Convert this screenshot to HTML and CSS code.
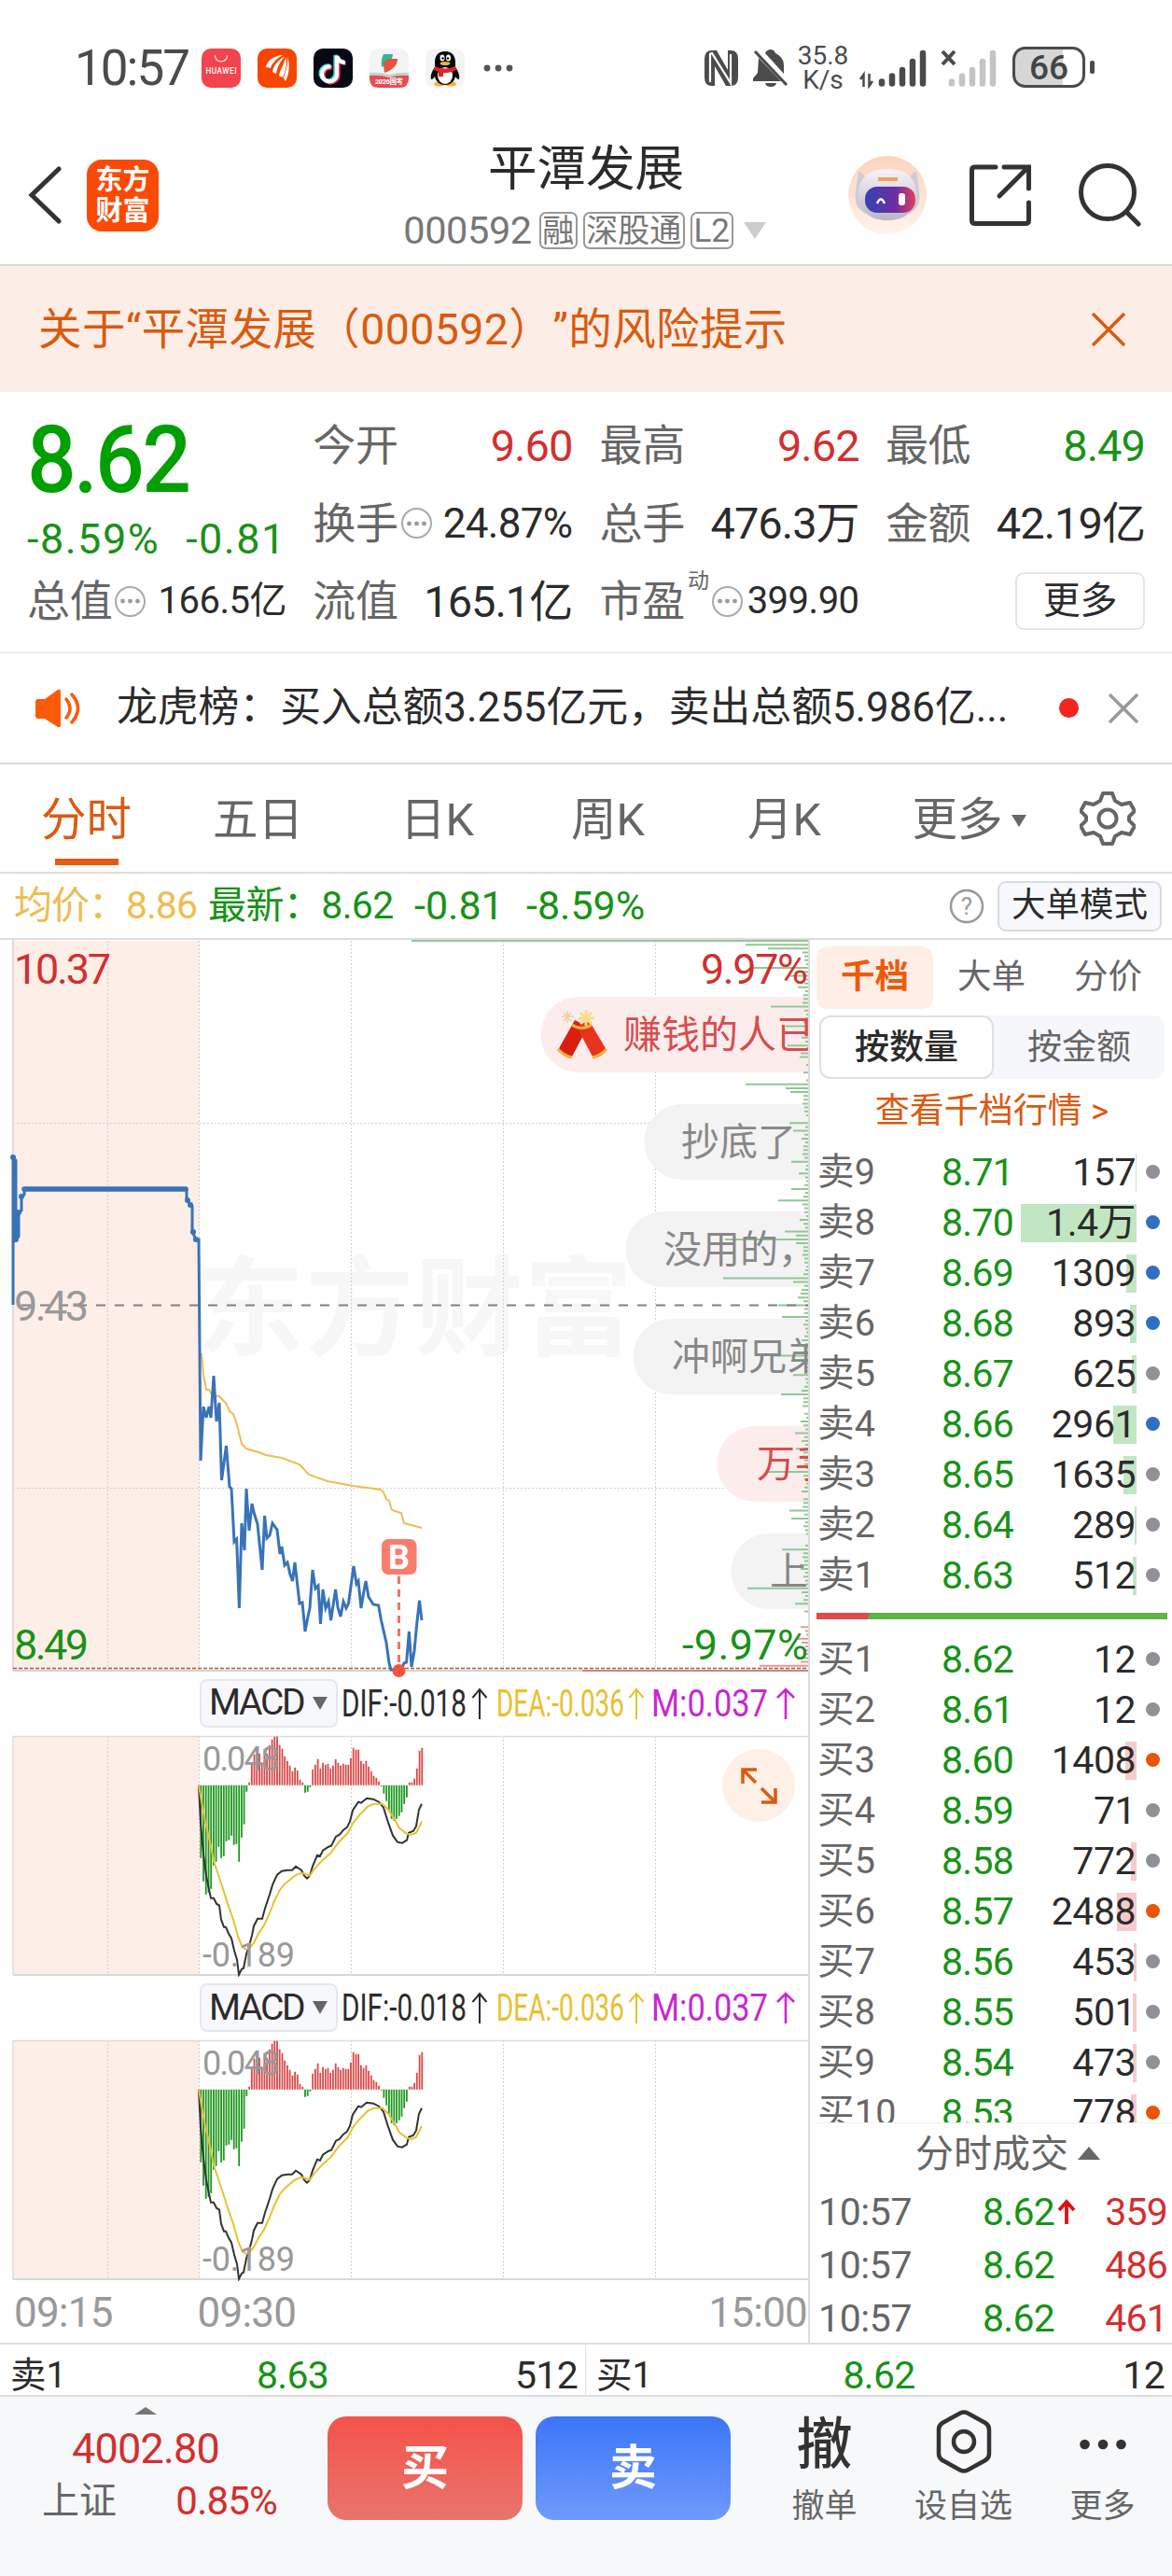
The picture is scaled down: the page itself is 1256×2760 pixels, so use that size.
FILE: index.html
```html
<!DOCTYPE html>
<html lang="zh-CN">
<head>
<meta charset="utf-8">
<title>平潭发展 000592</title>
<link rel="stylesheet" href="styles.css">
</head>
<body>
<div class="phone">
  <div class="status">
    <span class="clock">10:57</span>
    <div class="apps">
      <svg viewBox="0 0 42 42"><rect width="42" height="42" rx="10" fill="#f2444f"/><path d="M14.500 7.500a6.500 6.500 0 0 0 13 0" fill="none" stroke="#fff" stroke-width="1.200"/><text x="21" y="27" font-size="8.200" font-weight="500" fill="#fff" text-anchor="middle" textLength="33">HUAWEI</text></svg>
      <svg viewBox="0 0 42 42"><rect width="42" height="42" rx="10" fill="#f84600"/><path d="M27 7C17 8 10 13 9 20l5 1C15 16 20 11 27 7zM29 8c-7 5-12 10-13 17l4 2c1-8 5-13 9-19zM30 9c-1 8-6 13-7 20l4 2c3-7 5-14 3-22zM32 9c1 9-2 15-4 23l2 3c4-8 5-18 2-26z" fill="#fff"/></svg>
      <svg viewBox="0 0 42 42"><rect width="42" height="42" rx="10" fill="#070a16"/><g fill="none" stroke-width="4.200"><path d="M17 18.500a8 8 0 1 0 6.500 8.500V7c1 4 4 7 9 7" stroke="#3fe0dc"/><path d="M20 20.500a8 8 0 1 0 6.500 8V9c1 4 4 7 8 7" stroke="#f0325a"/><path d="M18.500 19.500a8 8 0 1 0 6.500 8V8c1 4 4 7 9 7" stroke="#fff"/></g></svg>
      <svg viewBox="0 0 42 42"><rect width="42" height="42" rx="10" fill="#f3f4f3"/><path d="M0 28q10-2 21 1 11-3 21-1v4q0 10-10 10H10Q0 42 0 32z" fill="#e94a52"/><path d="M0 26q11-1 21 2 10-3 21-2v3q-11-1-21 2Q11 28 0 29z" fill="#b9d8cf"/><path d="M15 6h10q0 9-12 14-1-9 2-14z" fill="#2fb79b"/><path d="M15 15l5-4h10q0 10-14 15-1-6-1-11z" fill="#ea5140"/><text x="21" y="38" font-size="7.500" font-weight="700" fill="#fff" text-anchor="middle" textLength="30">2026国考</text></svg>
      <svg viewBox="0 0 42 42"><rect width="42" height="42" rx="10" fill="#f4f4f4"/><ellipse cx="15" cy="38" rx="6" ry="2.500" fill="#f5b22c"/><ellipse cx="27" cy="38" rx="6" ry="2.500" fill="#f5b22c"/><path d="M21 3c-8 0-11 5-11 12v5c-3 4-5 9-4 13 2 0 3-2 4-3 1 6 6 9 11 9s10-3 11-9c1 1 2 3 4 3 1-4-1-9-4-13v-5c0-7-3-12-11-12z" fill="#050505"/><ellipse cx="21" cy="29" rx="8" ry="9" fill="#fff"/><path d="M10 19q11 5 22 0l1 4q-7 4-14 3v4h-5v-5l-5-2z" fill="#e02229"/><ellipse cx="18" cy="10" rx="2.500" ry="3.600" fill="#fff"/><ellipse cx="24.500" cy="10" rx="2.500" ry="3.600" fill="#fff"/><circle cx="18.500" cy="10.500" r="1.200"/><circle cx="24" cy="10.500" r="1.200"/><ellipse cx="21" cy="16" rx="5.500" ry="2" fill="#f5b22c"/></svg>
    </div>
    <svg class="more-dots" viewBox="0 0 32 10"><circle cx="4" cy="5" r="3.400"/><circle cx="16" cy="5" r="3.400"/><circle cx="28" cy="5" r="3.400"/></svg>
    <svg class="nfc" viewBox="0 0 36 38"><path d="M8 0h5l12 21V0h3q8 0 8 9v20q0 9-8 9h-5L11 17v21H8q-8 0-8-9V9q0-9 8-9z" fill="#4b4b4b"/><path d="M6 34V4l2-1 20 32V4" fill="none" stroke="#fff" stroke-width="2.200"/></svg>
    <svg class="bell" viewBox="0 0 38 40"><path d="M2 2l34 36" stroke="#4b4b4b" stroke-width="3"/><path d="M13 4q1-3 5-4 5 0 6 4 9 4 9 13v9zM6 9l24 25H0v-3l5-6zM13 36h12q-1 4-6 4t-6-4z" fill="#4b4b4b"/></svg>
    <div class="speed"><span>35.8</span><span>K/s</span></div>
    <svg class="signals" viewBox="0 0 150 44"><g stroke="#4b4b4b" stroke-width="2.500" fill="none"><path d="M2 34l3.500-5v13M15 36l-3.500 5V28"/></g><g stroke="#4b4b4b" stroke-width="6.500" stroke-linecap="round"><path d="M25 38.500v-2M36 38.500v-8M47 38.500V24M58 38.500V15M69 38.500V6"/></g><g stroke="#c4c4c4" stroke-width="6.500" stroke-linecap="round"><path d="M100 38.500v-2M111 38.500v-8M122 38.500V24M133 38.500V15M144 38.500V6"/></g><path d="M90 4l13 14M103 4L90 18" stroke="#4b4b4b" stroke-width="4"/></svg>
    <svg class="battery" viewBox="0 0 90 46"><rect x="1.500" y="1.500" width="75" height="41" rx="12" fill="#fff"/><path d="M13.500 1.500H54v41H13.500a12 12 0 0 1-12-12v-17a12 12 0 0 1 12-12z" fill="#d6d6d6"/><rect x="1.500" y="1.500" width="75" height="41" rx="12" fill="none" stroke="#4b4b4b" stroke-width="3"/><rect x="83" y="15" width="5" height="14" rx="2" fill="#4b4b4b"/><text x="39" y="35" font-size="37" font-weight="500" fill="#444" text-anchor="middle" textLength="42">66</text></svg>
  </div>

  <header class="nav">
    <svg class="back" viewBox="0 0 36 62"><path d="M33 3L4 31l29 28" fill="none" stroke="#333" stroke-width="5" stroke-linecap="round"/></svg>
    <div class="logo"><span>东方</span><span>财富</span></div>
    <div class="title">
      <h1>平潭发展</h1>
      <div class="code"><span class="num">000592</span><span class="badge b1">融</span><span class="badge b2">深股通</span><span class="badge b3">L2</span><svg viewBox="0 0 24 18"><path d="M0 0h24L12 18z" fill="#ccc"/></svg></div>
    </div>
    <svg class="robot" viewBox="0 0 84 84">
      <defs><linearGradient id="halo" x2="0" y2="1"><stop stop-color="#fcd3bd"/><stop offset="1" stop-color="#fff3ec"/></linearGradient><linearGradient id="visor" x2="1"><stop stop-color="#3542b8"/><stop offset=".6" stop-color="#6d2d9f"/><stop offset="1" stop-color="#e0405c"/></linearGradient><linearGradient id="shell" x2="0" y2="1"><stop stop-color="#f6f4f7"/><stop offset="1" stop-color="#b9b6c6"/></linearGradient></defs>
      <circle cx="42" cy="42" r="42" fill="url(#halo)"/><path d="M11 17q4 0 8 7h46q4-7 8-7l3 20q2 12-3 19l-7 6H18l-7-6Q6 49 8 37z" fill="#cfccd9"/><path d="M42 14c20 0 31 10 31 27 0 18-12 28-31 28S11 59 11 41c0-17 11-27 31-27z" fill="url(#shell)"/><path d="M32 25h21" stroke="#f2a25b" stroke-width="4"/><rect x="18" y="33" width="54" height="28" rx="13" fill="url(#visor)"/><path d="M31 51q4-9 8 0" fill="none" stroke="#fff" stroke-width="2.500"/><rect x="54" y="40" width="7" height="13" rx="3" fill="#fff"/></svg>
    <svg class="share" viewBox="0 0 66 66"><path d="M28 3H6Q2.500 3 2.500 6v54q0 3.500 3.500 3.500h54q3.500 0 3.500-3.500V41M37 3h26.500v23M62 4L32 34" fill="none" stroke="#333" stroke-width="5" stroke-linecap="round"/></svg>
    <svg class="search" viewBox="0 0 68 68"><circle cx="32" cy="31" r="28.500" fill="none" stroke="#333" stroke-width="5"/><path d="M52 52l13 13" stroke="#333" stroke-width="5" stroke-linecap="round"/></svg>
  </header>

  <div class="banner"><span>关于“平潭发展（000592）”的风险提示</span><svg viewBox="0 0 38 38"><path d="M2 2l34 34M36 2L2 36" stroke="#db5a10" stroke-width="3.500"/></svg></div>

  <section class="quote">
    <div class="main-price"><div class="price">8.62</div><div class="chg"><span>-8.59%</span><span>-0.81</span></div></div>
    <div class="cell c2"><span>今开</span><b class="red">9.60</b></div>
    <div class="cell c3"><span>最高</span><b class="red">9.62</b></div>
    <div class="cell c4"><span>最低</span><b class="green">8.49</b></div>
    <div class="cell c2"><span>换手<i class="tip"></i></span><b class="sm wide">24.87%</b></div>
    <div class="cell c3"><span>总手</span><b>476.3万</b></div>
    <div class="cell c4"><span>金额</span><b>42.19亿</b></div>
    <div class="cell c1"><span>总值<i class="tip"></i></span><b class="sm">166.5亿</b></div>
    <div class="cell c2"><span>流值</span><b>165.1亿</b></div>
    <div class="cell c3"><span>市盈<sup>动</sup><i class="tip"></i></span><b class="sm">399.90</b></div>
    <div class="cell c4 end"><span class="more-btn">更多</span></div>
  </section>

  <div class="notice">
    <svg class="horn" viewBox="0 0 50 42"><path d="M0 14q0-3 3-3h7L24 1q3-1 3 2v36q0 3-3 2L10 32H3q-3 0-3-3z" fill="#fc5b0b"/><path d="M33 11q8 10 0 20M39 6q13 15 0 30" fill="none" stroke="#fc5b0b" stroke-width="3.500" stroke-linecap="round"/></svg>
    <span>龙虎榜：买入总额3.255亿元，卖出总额5.986亿...</span>
    <i class="red-dot"></i>
    <svg class="close" viewBox="0 0 34 34"><path d="M2 2l30 30M32 2L2 32" stroke="#999" stroke-width="3.500"/></svg>
  </div>

  <nav class="tabs">
    <span class="on">分时</span><span>五日</span><span>日K</span><span>周K</span><span>月K</span><span>更多<svg viewBox="0 0 16 13"><path d="M0 0h16L8 13z" fill="#666"/></svg></span>
    <svg class="gear" viewBox="0 0 60 60"><path d="M25 3h10l3 8 7 4 9-2 5 9-6 6v4l6 6-5 9-9-2-7 4-3 8H25l-3-8-7-4-9 2-5-9 6-6v-4l-6-6 5-9 9 2 7-4z" fill="none" stroke="#666" stroke-width="4" stroke-linejoin="round"/><circle cx="30" cy="30" r="9.500" fill="none" stroke="#666" stroke-width="4"/></svg>
  </nav>

  <div class="info">
    <span class="avg">均价：8.86</span><span class="last">最新：8.62</span><span class="d1">-0.81</span><span class="d2">-8.59%</span>
    <svg viewBox="0 0 38 38"><circle cx="19" cy="19" r="17" fill="none" stroke="#999" stroke-width="2.500"/><text x="19" y="28" font-size="26" fill="#999" text-anchor="middle">?</text></svg>
    <span class="mode">大单模式</span>
  </div>

  <main class="board">
    <div class="charts">
      <svg class="trend" viewBox="0 1007 866 784" id="trend">
        <rect x="14" y="1008" width="199.500" height="781" fill="#fdeee7"/>
        <text x="210" y="1443" font-size="116" font-weight="700" fill="#f7f7f7" textLength="468">东方财富</text>
        <g class="grid"><path d="M115.500 1008v781M213.500 1008v781M376.500 1008v781M539.500 1008v781M702.500 1008v781M14 1203.500h852M14 1594.500h852"/></g>
        <path d="M14 1007v783" stroke="#ddd" stroke-width="2"/>
        <g fill="#fdecec"><path d="M866 1068H620a40.500 40.500 0 0 0 0 81h246zM866 1528h-57a40.500 40.500 0 0 0 0 81h57z"/></g>
        <g fill="#f3f3f3"><path d="M866 1183H731a40.500 40.500 0 0 0 0 81h135zM866 1298H711a40.500 40.500 0 0 0 0 81h155zM866 1413H719a40.500 40.500 0 0 0 0 81h147zM866 1643h-42a40.500 40.500 0 0 0 0 81h42z"/></g>
        <g id="depth" fill="none" stroke-width="2"></g>
        <g font-size="41" fill="#888"><text x="730" y="1238">抄底了</text><text x="711" y="1353">没用的，</text><text x="720" y="1468">冲啊兄弟</text><text x="825" y="1698">上</text></g>
        <g font-size="41" fill="#d64d4f"><text x="668" y="1123">赚钱的人已</text><text x="811" y="1583">万手</text></g>
        <g><path d="M616 1093l14 7-18 34q-9-2-14-9z" fill="#d91f10"/><path d="M631 1093l-13 7 18 34q10-2 14-9z" fill="#e8341c"/><path d="M598 1124q6 7 15 9M650 1124q-6 7-15 9M613 1098q10 7 21 0" fill="none" stroke="#f3b13d" stroke-width="3"/><path d="M628 1082v17M620 1091h17M622 1085l12 12M634 1085l-12 12" stroke="#f8dd8a" stroke-width="3"/><path d="M608 1083v13M602 1089h13M604 1085l8 9M612 1085l-8 9" stroke="#ecd29a" stroke-width="1.500"/></g>
        <path d="M14 1398.500h852" stroke="#808080" stroke-width="2" stroke-dasharray="10 10" stroke-dashoffset="11"/>
        <path d="M14 1790h852" stroke="#d2d2d2" stroke-width="2"/>
        <path d="M624 1790h242" stroke="#c58686" stroke-width="2"/>
        <path d="M14 1787.500h852" stroke="#a85b32" stroke-width="1.500" stroke-dasharray="4 2"/>
        <path d="M216 1450L218 1473 221 1489 224 1489 227.500 1495 235 1496 242.500 1504 246 1512 250 1515 253.600 1525 259 1547 263.600 1552 277 1556 285 1559 302 1562 321 1569 331 1580 351 1587 378.500 1592 408 1596 411 1599 414 1606 417 1608 419.500 1617 423 1619 430 1621 433 1632 452 1637" fill="none" stroke="#edbd50" stroke-width="2"/>
        <path d="M14 1398V1240L17 1243V1328L20 1325V1300L23 1297V1283L26 1280V1274H200V1286L206 1292V1320L210 1328H213L215 1565 218 1507 221 1519 224 1507 226 1519 229 1474 232 1523 235 1503 237.500 1586 242.500 1549 246 1593 248 1595 251 1652 253.600 1649 256.400 1723 259 1632 262 1661 264 1595 267 1640 270 1611 272.500 1622 276 1633 278 1653 281 1682 283.600 1624 286 1648 289 1645 292 1632 297 1639 300 1665 302 1657 305 1677 308 1674 311 1687 313.500 1694 316 1674 321 1718 324 1717 327 1748 330 1732 332 1723 335 1682 338 1702 341 1699 343.500 1740 346 1703 349 1723 352 1716 354.600 1736 359.600 1703 362 1722 365 1732 368 1716 371 1723 373.500 1718 379 1678 382 1697 384 1694 387 1723 389.600 1707 392 1694 395 1711 400 1719 405.600 1720 408.500 1736 414 1760 417 1782 419 1789 430 1789 433 1782 435.600 1781 438.400 1748 441 1786 444 1769 446.700 1740 449.500 1715 452 1736" fill="none" stroke="#3873b8" stroke-width="3"/>
        <path d="M26 1274H199" stroke="#3873b8" stroke-width="5.500" stroke-linecap="round"/>
        <g fill="#3873b8"><circle cx="14" cy="1240" r="3"/><circle cx="17" cy="1328" r="3"/><circle cx="20" cy="1299" r="3"/><circle cx="23" cy="1282" r="3"/><circle cx="201" cy="1286" r="3"/><circle cx="204" cy="1291" r="3"/><circle cx="207" cy="1320" r="3"/><circle cx="210" cy="1328" r="3"/></g>
        <path d="M427.500 1689v92" stroke="#f4735f" stroke-width="3" stroke-dasharray="8 6"/>
        <circle cx="427.500" cy="1790" r="7" fill="#f5533f"/>
        <rect x="409" y="1649" width="37.500" height="38" rx="7" fill="#f97d6d"/><text x="427.500" y="1681" font-size="36" font-weight="700" fill="#fff" text-anchor="middle">B</text>
        <g font-size="45"><text x="15" y="1054" fill="#d22f2f" textLength="104">10.37</text><text x="15" y="1415" fill="#999" textLength="80">9.43</text><text x="15" y="1778" fill="#189218" textLength="80">8.49</text><text x="751" y="1054" fill="#d22f2f" textLength="115">9.97%</text><text x="731" y="1778" fill="#189218" textLength="135">-9.97%</text></g>
      </svg>
      <div class="ind"><span class="pick">MACD<svg viewBox="0 0 16 14"><path d="M0 0h16L8 14z" fill="#666"/></svg></span>
        <svg class="vals" viewBox="0 0 500 50"><g id="macd-vals" font-size="41"><g fill="#2b2b2b"><text x="4" y="39" textLength="134" lengthAdjust="spacingAndGlyphs">DIF:-0.018</text><path d="M152 42V10M144.500 19l7.500-9 7.500 9"/></g><g fill="#e8c02f"><text x="170" y="39" textLength="137" lengthAdjust="spacingAndGlyphs">DEA:-0.036</text><path class="y" d="M320 42V10M312.500 19l7.500-9 7.500 9"/></g><g fill="#c728d0"><text x="336" y="39" textLength="125" lengthAdjust="spacingAndGlyphs">M:0.037</text><path class="m" d="M480 42V10M471 19l9-9 9 9"/></g></g></svg></div>
      <svg class="macd" viewBox="0 1859 866 259">
        <g id="macd-body">
          <rect x="14" y="1860" width="199.500" height="255" fill="#fdeee7"/>
          <g class="grid"><path d="M115.500 1860v255M213.500 1860v255M376.500 1860v255M539.500 1860v255M702.500 1860v255"/></g>
          <path d="M866 1860.500H14V2116" fill="none" stroke="#ddd" stroke-width="1.500"/><path d="M14 2116h852" stroke="#d8d8d8" stroke-width="2"/>
          <path id="hist-up" stroke="#da4848" stroke-width="1.800"/><path id="hist-down" stroke="#1d981d" stroke-width="1.800"/>
          <path id="dif" fill="none" stroke="#333" stroke-width="2"/><path id="dea" fill="none" stroke="#e8c02f" stroke-width="2"/>
          <g font-size="36" fill="#999"><text x="217" y="1897" textLength="83">0.048</text><text x="217" y="2107" textLength="99">-0.189</text></g>
        </g>
        <circle cx="813" cy="1913" r="39" fill="#fef0e7"/><path d="M810 1910l-14-14m0 15v-15h15M816 1916l15 15m0-15v15h-15" fill="none" stroke="#db5a10" stroke-width="3.500"/>
      </svg>
      <div class="ind"><span class="pick">MACD<svg viewBox="0 0 16 14"><path d="M0 0h16L8 14z" fill="#666"/></svg></span><svg class="vals" viewBox="0 0 500 50"><use href="#macd-vals"/></svg></div>
      <svg class="macd" viewBox="0 1859 866 259"><use href="#macd-body"/></svg>
      <div class="axis"><span>09:15</span><span>09:30</span><span>15:00</span></div>
    </div>

    <aside class="book">
      <div class="modes"><span class="on">千档</span><span>大单</span><span>分价</span></div>
      <div class="seg"><span class="on">按数量</span><span>按金额</span></div>
      <div class="link">查看千档行情 &gt;</div>
      <div class="rows sell">
        <div class="row"><span>卖9</span><span>8.71</span><b>157<i style="width:1px"></i></b><em></em></div>
        <div class="row"><span>卖8</span><span>8.70</span><b>1.4万<i style="width:124px"></i></b><em class="blue"></em></div>
        <div class="row"><span>卖7</span><span>8.69</span><b>1309<i style="width:11px"></i></b><em class="blue"></em></div>
        <div class="row"><span>卖6</span><span>8.68</span><b>893<i style="width:7px"></i></b><em class="blue"></em></div>
        <div class="row"><span>卖5</span><span>8.67</span><b>625<i style="width:5px"></i></b><em></em></div>
        <div class="row"><span>卖4</span><span>8.66</span><b>2961<i style="width:25px"></i></b><em class="blue"></em></div>
        <div class="row"><span>卖3</span><span>8.65</span><b>1635<i style="width:14px"></i></b><em></em></div>
        <div class="row"><span>卖2</span><span>8.64</span><b>289<i style="width:2px"></i></b><em></em></div>
        <div class="row"><span>卖1</span><span>8.63</span><b>512<i style="width:4px"></i></b><em></em></div>
      </div>
      <div class="ratio"></div>
      <div class="rows buy">
        <div class="row"><span>买1</span><span>8.62</span><b>12</b><em></em></div>
        <div class="row"><span>买2</span><span>8.61</span><b>12</b><em></em></div>
        <div class="row"><span>买3</span><span>8.60</span><b>1408<i style="width:12px"></i></b><em class="orange"></em></div>
        <div class="row"><span>买4</span><span>8.59</span><b>71</b><em></em></div>
        <div class="row"><span>买5</span><span>8.58</span><b>772<i style="width:6px"></i></b><em></em></div>
        <div class="row"><span>买6</span><span>8.57</span><b>2488<i style="width:21px"></i></b><em class="orange"></em></div>
        <div class="row"><span>买7</span><span>8.56</span><b>453<i style="width:3px"></i></b><em></em></div>
        <div class="row"><span>买8</span><span>8.55</span><b>501<i style="width:4px"></i></b><em></em></div>
        <div class="row"><span>买9</span><span>8.54</span><b>473<i style="width:4px"></i></b><em></em></div>
        <div class="row"><span>买10</span><span>8.53</span><b>778<i style="width:6px"></i></b><em class="orange"></em></div>
      </div>
      <div class="deal-title">分时成交<svg viewBox="0 0 24 14"><path d="M0 14h24L12 0z" fill="#666"/></svg></div>
      <div class="deal"><span>10:57</span><span>8.62</span><svg viewBox="0 0 20 28"><path d="M10 27V4M2 12l8-9 8 9" fill="none" stroke="#e01010" stroke-width="3.800"/></svg><b>359</b></div>
      <div class="deal"><span>10:57</span><span>8.62</span><b>486</b></div>
      <div class="deal"><span>10:57</span><span>8.62</span><b>461</b></div>
    </aside>
  </main>

  <div class="best"><div><span>卖1</span><b>8.63</b><span>512</span></div><div><span>买1</span><b>8.62</b><span>12</span></div></div>

  <footer class="foot">
    <div class="index"><svg viewBox="0 0 24 8"><path d="M0 8h24L12 0z" fill="#777"/></svg><b>4002.80</b><div><span>上证</span><b>0.85%</b></div></div>
    <div class="btn buy-btn">买</div><div class="btn sell-btn">卖</div>
    <div class="tool t1"><strong>撤</strong><span>撤单</span></div>
    <div class="tool t2"><svg viewBox="0 0 60 68"><path d="M26 3.500q4-2 8 0L53 14q4 2.500 4 7v26q0 4.500-4 7L34 64.500q-4 2-8 0L7 54q-4-2.500-4-7V21q0-4.500 4-7z" fill="none" stroke="#333" stroke-width="4.500"/><circle cx="30" cy="34" r="11" fill="none" stroke="#333" stroke-width="4.500"/></svg><span>设自选</span></div>
    <div class="tool t3"><svg viewBox="0 0 60 68"><g fill="#333"><circle cx="10.500" cy="37" r="5.300"/><circle cx="30" cy="37" r="5.300"/><circle cx="49.500" cy="37" r="5.300"/></g></svg><span>更多</span></div>
  </footer>
</div>
<script src="chart.js"></script>
</body>
</html>
```
FILE: styles.css
```css
* { box-sizing: border-box; }
body { margin: 0; background: #fff; font-family: Roboto, "Noto Sans CJK SC", sans-serif; line-height: 1; color: #2b2b2b; }
b, i, em, h1, strong { font-weight: 400; font-style: normal; margin: 0; }
svg { display: block; flex: none; overflow: hidden; }
span, b { white-space: nowrap; }
.phone { width: 1256px; height: 2760px; overflow: hidden; display: flex; flex-direction: column; }
.phone > * { flex: none; }

.status { height: 146px; display: flex; align-items: center; padding-left: 80px; color: #4b4b4b; }
.clock { font-size: 53px; width: 136px; letter-spacing: -2px; }
.apps { display: flex; gap: 18px; }
.apps svg { width: 42px; height: 42px; }
.more-dots { width: 32px; margin-left: 20px; fill: #555; }
.nfc { width: 36px; margin-left: 205px; }
.bell { width: 38px; margin-left: 16px; }
.speed { width: 60px; margin-left: 7px; font-size: 28px; line-height: 26px; display: flex; flex-direction: column; align-items: center; }
.signals { width: 150px; height: 44px; margin-left: 8px; }
.battery { width: 90px; height: 46px; margin-left: 15px; }

.nav { height: 139px; display: flex; align-items: flex-start; border-bottom: 2px solid #d9d9d9; padding-left: 30px; }
.back { width: 36px; height: 62px; margin-top: 32px; }
.logo { width: 77px; height: 77px; margin: 25px 0 0 27px; background: #fb4a05; border-radius: 16px; color: #fff; font-weight: 700; font-size: 29px; line-height: 33px; display: flex; flex-direction: column; align-items: center; justify-content: center; }
.title { width: 400px; margin: 9px 0 0 258px; display: flex; flex-direction: column; align-items: center; }
.title h1 { font-size: 52.5px; line-height: 53px; }
.code { display: flex; align-items: center; height: 42px; margin-top: 18px; font-size: 34px; color: #777; }
.code .num { font-size: 41.5px; letter-spacing: -.4px; margin: 0 8px 0 -3px; }
.badge { border: 2px solid #999; border-radius: 7px; height: 40px; display: flex; align-items: center; justify-content: center; margin-right: 6px; }
.b1 { width: 41px; } .b2 { width: 109px; } .b3 { width: 46px; font-size: 35px; }
.code svg { width: 24px; margin-left: 5px; }
.robot { width: 84px; margin: 21px 0 0 81px; }
.share { width: 66px; margin: 30px 0 0 46px; }
.search { width: 68px; margin: 29px 0 0 50px; }

.banner { height: 135px; background: #fceee6; display: flex; align-items: center; justify-content: space-between; padding: 2px 49px 0 41px; color: #db5a10; font-size: 46.5px; letter-spacing: .4px; text-spacing-trim: space-all; }
.banner svg { width: 38px; margin-top: -2px; }

.quote { height: 280px; padding: 15px 29px 14px 29px; border-bottom: 2px solid #ececec; display: grid; grid-template-columns: 277px 278px 277px 278px; column-gap: 29.300px; grid-template-rows: 84px 83px 84px; }
.main-price { grid-row: 1 / 3; color: #029f02; }
.price { font-size: 101px; font-weight: 500; letter-spacing: -3px; margin-top: 7px; transform: scaleX(.92); transform-origin: 0 0; }
.chg { display: flex; gap: 28px; font-size: 45px; letter-spacing: 1.5px; margin-top: 12px; color: #189218; }
.cell { display: flex; align-items: center; justify-content: space-between; font-size: 46px; letter-spacing: -.3px; color: #666; }
.cell span { display: flex; align-items: center; }
.cell b { font-size: 47px; color: #2b2b2b; letter-spacing: -1px; }
.cell b.sm { font-size: 40px; letter-spacing: -.5px; }
.cell b.wide { font-size: 44px; letter-spacing: -.7px; }
.cell b.red { color: #d22f2f; } .cell b.green { color: #189218; }
.c1, .c2, .c3, .c4 { width: 278px; }
.cell.end { justify-content: flex-end; }
.tip { width: 33px; height: 33px; border: 2.500px solid #aaa; border-radius: 50%; margin-left: 3px; background: radial-gradient(circle, #999 2.200px, transparent 2.700px) center / 8px 8px repeat-x; background-clip: content-box; padding: 0 2px; }
.cell sup { font-size: 23px; align-self: flex-start; margin: -10px 0 0 3px; line-height: 1; }
.more-btn { width: 139px; height: 62px; border: 2px solid #e5e5e5; border-radius: 9px; justify-content: center; font-size: 40px; color: #2b2b2b; }

.notice { height: 119px; display: flex; align-items: center; border-bottom: 2px solid #ddd; padding: 0 35px 0 38px; font-size: 43.8px; }
.horn { width: 50px; } .notice span { margin-left: 37px; width: 985px; }
.red-dot { width: 21px; height: 21px; border-radius: 50%; background: #f4241f; margin-left: 25px; }
.close { width: 34px; margin-left: auto; }

.tabs { height: 117px; border-bottom: 2px solid #ddd; display: flex; align-items: center; color: #666; font-size: 48.5px; padding-left: 9px; }
.tabs span { display: flex; align-items: center; justify-content: center; height: 115px; width: 167px; padding-top: 5px; }
.tabs span:nth-child(2) { width: 201px; } .tabs span:nth-child(3) { width: 183px; } .tabs span:nth-child(4) { width: 183px; } .tabs span:nth-child(5) { width: 195px; } .tabs span:nth-child(6) { width: 201px; }
.tabs .on { color: #db5a10; background: linear-gradient(#e55a10, #e55a10) 50% 101px / 68px 7px no-repeat; }
.tabs span svg { width: 16px; margin-left: 9px; }
.gear { width: 60px; margin-left: 18px; }

.info { height: 71px; border-bottom: 2px solid #ddd; display: flex; align-items: center; padding: 0 11px 0 15px; font-size: 43px; color: #189218; }
.info .avg { color: #eebd52; width: 208px; font-size: 41px; letter-spacing: -1px; } .info .last { width: 221px; font-size: 41px; letter-spacing: -.6px; }
.info .d1 { width: 120px; }
.info svg { width: 38px; margin-left: auto; }
.mode { width: 176px; height: 54px; margin-left: 14px; border: 2px solid #d8dbe2; background: #f7f8fb; border-radius: 9px; font-size: 36.500px; color: #2b2b2b; display: flex; align-items: center; justify-content: center; }

.board { height: 1505px; display: flex; border-bottom: 2px solid #ddd; }
.charts { width: 868px; border-right: 2px solid #ddd; display: flex; flex-direction: column; }
.trend { width: 866px; height: 784px; overflow: visible; clip-path: inset(0 0 -8px 0); }
.macd { width: 866px; height: 259px; }
.grid { fill: none; stroke: #d0d0d0; stroke-width: 1; stroke-dasharray: 2 2; }
.ind { height: 68px; padding: 0 0 1px 214px; display: flex; align-items: center; font-size: 40px; }
.ind + .macd + .ind { height: 67px; }
.pick { width: 148px; height: 52px; border: 2px solid #e6e7ea; background: #f7f8fb; border-radius: 8px; display: flex; align-items: center; justify-content: space-between; padding: 0 9px 0 8px; font-size: 39px; letter-spacing: -2.3px; flex: none; }
.pick svg { width: 16px; }
.vals { width: 500px; height: 50px; }
.vals path { fill: none; stroke: #2b2b2b; stroke-width: 2; } .vals .y { stroke: #e8c02f; } .vals .m { stroke: #c728d0; stroke-width: 2.600px; }
.axis { display: flex; padding: 12px 1px 0 15px; font-size: 44px; letter-spacing: -.8px; color: #999; }
.axis span:nth-child(2) { margin-left: 91px; } .axis span:last-child { margin-left: auto; }

.book { flex: 1; padding: 7px 7px 0; display: flex; flex-direction: column; }
.book > * { flex: none; }
.modes { display: flex; height: 67px; font-size: 36.500px; color: #666; }
.modes span { width: 125px; display: flex; align-items: center; justify-content: center; }
.modes .on { background: #feeee6; border-radius: 12px; color: #ee5a0c; font-weight: 700; }
.seg { display: flex; height: 68px; margin: 7px 3px 0; background: #f6f7fa; border-radius: 12px; font-size: 37px; color: #666; }
.seg span { flex: 1; display: flex; align-items: center; justify-content: center; }
.seg .on { background: #fff; border: 2px solid #e0e0e0; border-radius: 12px; color: #2b2b2b; font-weight: 500; }
.link { height: 73px; line-height: 70px; text-align: center; font-size: 37px; color: #db5a10; }
.rows { overflow: hidden; }
.row { height: 54px; display: grid; grid-template-columns: 132px 80px 133px 31px; align-items: center; font-size: 41px; letter-spacing: -.7px; }
.row span:first-child { color: #666; font-size: 39.5px; padding-left: 1px; letter-spacing: .3px; }
.row span:nth-child(2) { color: #189218; padding-left: 2px; }
.row b { height: 41px; line-height: 41px; position: relative; display: flex; justify-content: flex-end; z-index: 0; padding-right: 1px; margin-right: 2px; letter-spacing: -.5px; }
.row i { position: absolute; right: 0; top: 0; height: 41px; background: #c2e6c2; z-index: -1; }
.buy .row i { background: #f8caca; }
.row em { width: 15px; height: 15px; border-radius: 50%; background: #909096; margin: -2px 0 0 8px; }
.row em.blue { background: #3070c0; } .row em.orange { background: #e95505; }
.rows.sell { height: 486px; }
.ratio { height: 7px; margin: 13px 0 16px; background: linear-gradient(105deg, #e04c4c 55px, #5db546 55px); }
.rows.buy { height: 524px; border-bottom: 1px solid #eee; margin-right: -7px; }
.deal-title { height: 67px; padding-left: 34px; display: flex; align-items: center; justify-content: center; font-size: 41px; color: #666; gap: 10px; }
.deal-title svg { width: 24px; margin-top: -4px; }
.deal { height: 57px; display: flex; align-items: center; font-size: 41px; color: #666; letter-spacing: -.7px; }
.deal span:first-child { width: 178px; padding-left: 2px; letter-spacing: -.4px; }
.deal span:nth-child(2) { color: #189218; }
.deal svg { width: 20px; margin: -2px 0 0 3px; }
.deal b { margin-left: auto; color: #d22f2f; letter-spacing: -.8px; }

.best { height: 56px; display: flex; border-bottom: 2px solid #ddd; }
.best div { width: 628px; padding: 13px 8px 0 11px; display: grid; grid-template-columns: 1fr 80px 1fr; align-items: center; font-size: 41px; letter-spacing: -.7px; border-right: 1px solid #e2e2e2; }
.best div + div { border-right: 0; }
.best span:first-child { font-size: 38.5px; letter-spacing: 0; } .best span:last-child { text-align: right; } .best b { color: #189218; }

.foot { flex: 1 !important; background: #f7f8fa; display: flex; padding-top: 11px; }
.index { width: 312px; display: flex; flex-direction: column; align-items: center; color: #d22f2f; font-size: 45px; letter-spacing: -.8px; }
.index svg { width: 24px; height: 8px; }
.index > b { margin-top: 14px; }
.index div { width: 252px; margin: 13px 0 0 30px; display: flex; justify-content: space-between; align-items: center; font-size: 41px; }
.index div b { font-size: 42px; } .index div span { color: #666; letter-spacing: 0; font-size: 40px; }
.btn { width: 209px; height: 111px; border-radius: 20px; margin: 10px 0 0 39px; color: #fff; font-size: 51px; font-weight: 700; display: flex; align-items: center; justify-content: center; }
.buy-btn { background: linear-gradient(#f4524a, #e9746d); } .sell-btn { background: linear-gradient(#3b76f7, #7099fc); margin-left: 14px; }
.tool { width: 149px; display: flex; flex-direction: column; align-items: center; color: #666; font-size: 35px; }
.t1 { margin-left: 26px; }
.tool strong { font-size: 60px; font-weight: 500; color: #333; height: 68px; line-height: 76px; margin-top: 3px; }
.tool svg { width: 60px; height: 68px; margin-top: 3px; }
.tool span { margin-top: 18px; }
```
FILE: chart.js
```js
// Depth bars along the right edge: one level per cent, [level, left edge].
const bars = { 0: 441, 1: 799, 2: 823, 7: 807, 9: 845, 12: 855, 17: 826, 22: 842, 27: 844, 29: 858, 30: 857, 37: 799, 38: 842, 39: 847, 47: 846, 49: 850, 57: 848, 60: 856, 64: 848, 67: 834, 72: 857, 75: 841, 76: 853, 77: 777, 78: 853, 87: 775, 88: 850, 91: 858, 92: 855, 94: 834, 97: 838, 107: 828, 112: 850, 117: 837, 124: 858, 127: 852, 131: 853, 137: 823, 147: 846, 149: 848, 157: 838, 161: 857, 162: 858, 167: 801, 171: 852, 177: 858, 180: 854, 186: 858, 187: 814 };
const short = [3, 5, 6, 4, 2, 5, 3, 4, 7, 3, 5, 2, 4];
let green = '', red = '';
for (let i = 0; i < 188; i++) {
  if ([31, 33, 35, 46, 121, 143, 154, 155, 172, 174, 175, 176].includes(i)) continue;
  const y = (1008 + i * 4.154).toFixed(1);
  const left = bars[i] || 866 - short[(i * 5) % 13];
  const seg = `M${left} ${y}H866`;
  if (i > 176) red += seg; else green += seg;
}
document.getElementById('depth').innerHTML = `<path d="${green}" stroke="#92c795"/><path d="${red}" stroke="#e59a98"/>`;

// MACD values are distances from the zero line, one per minute.
const hist = [-78,-103,-117,-115,-111,-86,-82,-66,-78,-76,-60,-59,-54,-64,-63,-82,-56,-42,-7,3,23,33,36,34,24,39,34,43,49,52,52,43,39,31,26,21,15,19,16,6,3,-8,-7,-2,17,22,28,18,24,22,23,18,21,28,24,21,23,22,22,29,40,38,38,26,23,26,20,15,10,8,4,-1,-9,-17,-26,-36,-38,-36,-33,-29,-20,-13,3,3,7,18,37,40];
const zero = 1912.7;
let up = '', down = '';
hist.forEach((v, i) => {
  const seg = `M${(215.3 + i * 2.724).toFixed(1)} ${zero}v${-v}`;
  if (v > 0) up += seg; else down += seg;
});
document.getElementById('hist-up').setAttribute('d', up);
document.getElementById('hist-down').setAttribute('d', down);
const dif = [213,0,215,41,218,74,221,97,224,112,226,121,229,121,232,127,235,129,237,144,240,152,242,152,245,159,248,164,251,177,254,187,256,203,259,197,261,196,264,181,267,172,270,161,272,151,276,143,281,143,284,132,289,117,292,107,297,96,302,92,308,91,313,91,317,87,323,91,326,97,329,100,332,97,335,87,340,75,343,76,346,70,352,66,355,65,360,55,364,53,368,48,372,45,375,39,378,27,384,18,387,19,393,14,400,15,406,18,411,24,416,40,421,54,426,61,431,62,436,59,438,51,443,49,446,44,449,26,452,20];
const dea = [213,0,216,17,220,39,225,61,229,81,234,96,239,111,244,127,250,144,255,162,259,172,263,176,267,175,272,169,277,159,283,150,289,137,294,124,300,112,305,106,311,101,316,97,323,94,327,95,332,97,336,91,344,82,355,72,363,61,373,51,378,41,386,31,394,23,401,20,410,20,416,26,422,35,428,46,436,52,441,53,446,51,452,39];
const line = (p) => 'M' + p.map((v, i) => (i % 2 ? v + zero : v)).join(' ');
document.getElementById('dif').setAttribute('d', line(dif));
document.getElementById('dea').setAttribute('d', line(dea));
```
